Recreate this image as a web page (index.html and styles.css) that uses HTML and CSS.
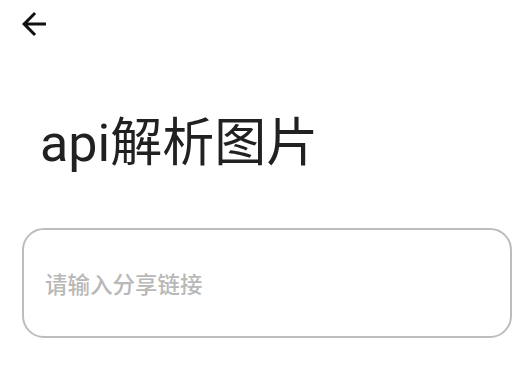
FILE: index.html
```html
<!DOCTYPE html>
<html lang="zh-CN">
<head>
<meta charset="utf-8">
<link rel="stylesheet" href="styles.css">
</head>
<body>
<div class="page">
  <header class="toolbar">
    <button class="back" aria-label="返回">
      <svg viewBox="0 0 24 24" width="36" height="36"><path d="M20 11H7.83l5.59-5.59L12 4l-8 8 8 8 1.41-1.41L7.83 13H20v-2z" fill="#111"/></svg>
    </button>
  </header>
  <h1 class="title">api解析图片</h1>
  <div class="field">
    <input class="input" type="text" placeholder="请输入分享链接">
  </div>
</div>
</body>
</html>
```
FILE: styles.css
```css
html, body {
  margin: 0;
  padding: 0;
  background: #fff;
}
body {
  font-family: Roboto, "Noto Sans CJK SC", sans-serif;
  width: 520px;
  height: 368px;
  overflow: hidden;
}
.page {
  display: flex;
  flex-direction: column;
}
.toolbar {
  height: 48px;
  display: flex;
  align-items: center;
}
.back {
  border: 0;
  background: none;
  padding: 0;
  margin: 0 0 0 16px;
  width: 36px;
  height: 36px;
  display: flex;
}
.title {
  margin: 66px 0 0 40px;
  font-size: 52px;
  line-height: 60px;
  font-weight: 400;
  color: #212121;
}
.field {
  margin: 54px 8px 0 22px;
}
.input {
  box-sizing: border-box;
  width: 100%;
  height: 110px;
  border: 2px solid #bdbdbd;
  border-radius: 22px;
  padding: 0 0 0 21px;
  font-family: "Noto Sans CJK SC", sans-serif;
  font-size: 22.5px;
  font-weight: 500;
  color: #212121;
  outline: none;
  background: #fff;
}
.input::placeholder {
  color: #b8b8b8;
}
```
